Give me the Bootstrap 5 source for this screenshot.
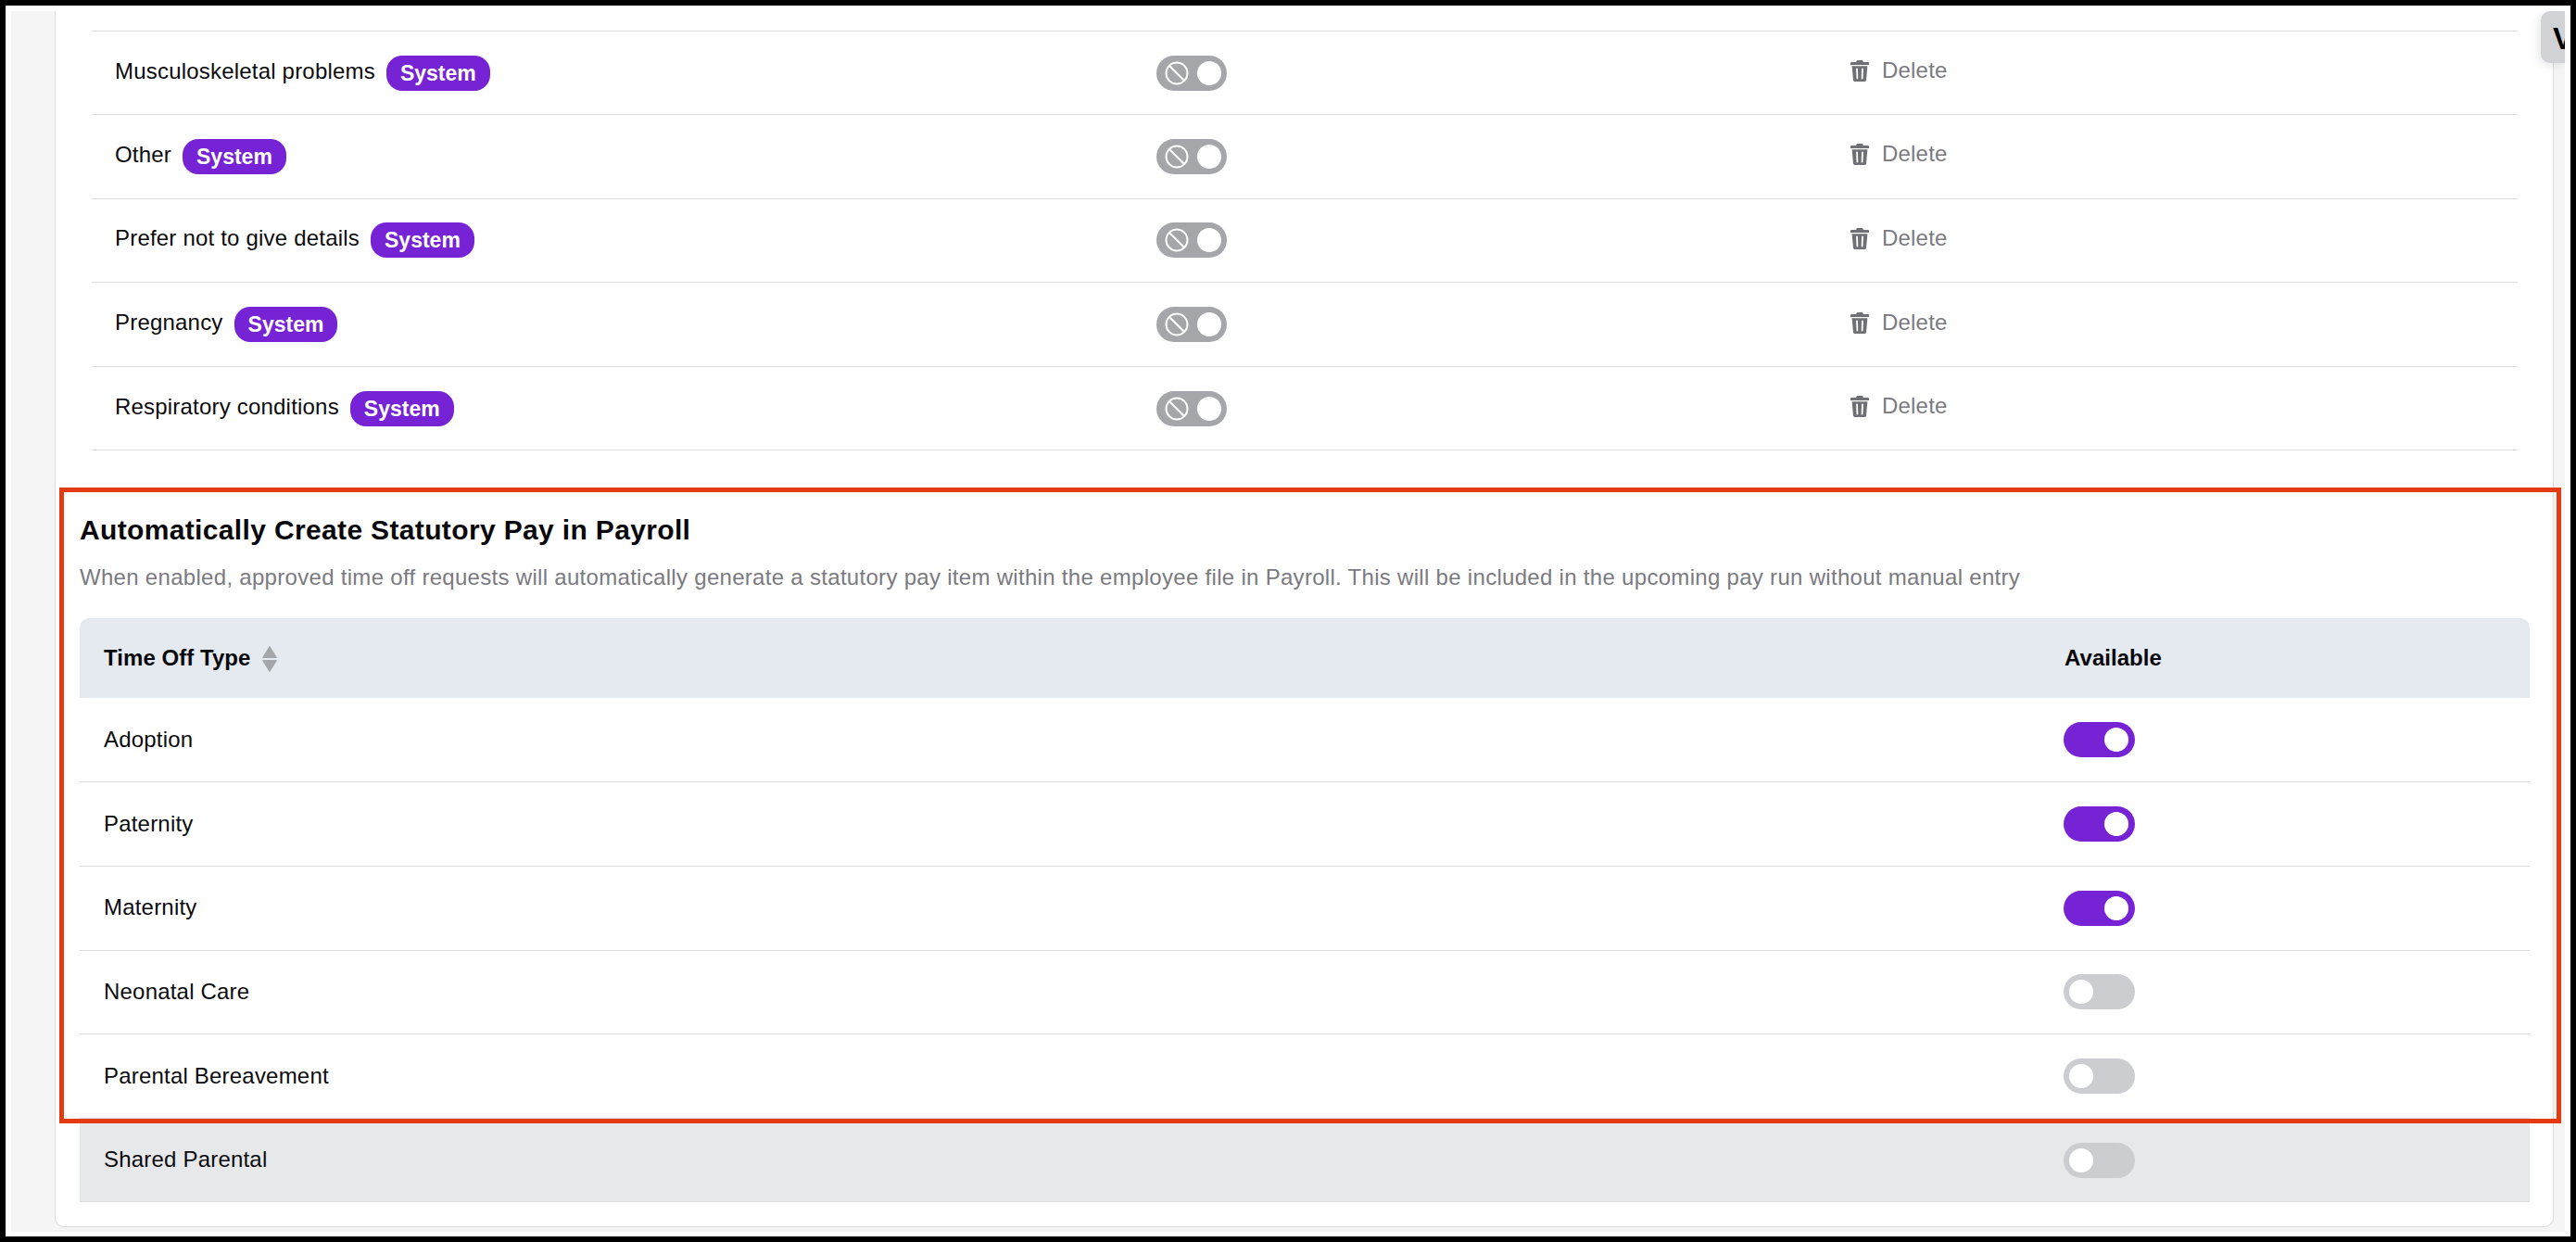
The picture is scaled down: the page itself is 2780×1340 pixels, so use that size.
<!doctype html>
<html lang="en"><head><meta charset="utf-8"><title>Time off settings</title>
<link href="https://cdn.jsdelivr.net/npm/bootstrap@5.3.0/dist/css/bootstrap.min.css" rel="stylesheet">
<style>
html,body{height:100%;margin:0}
body{background:#000;padding:6px;overflow:hidden;font-family:"Liberation Sans",Arial,sans-serif;font-size:24px;color:#0b0b0d;letter-spacing:.2px}
.shot{position:relative;height:1328px;background:#fff;padding:6px 6px 5px}
.canvas{height:100%;background:#f5f5f6;padding:0 12px 5px 47px}
.sheet{height:100%;background:#fff;border:1px solid #dcdcdf;border-top:0;border-radius:0 0 10px 10px;overflow:hidden;padding-top:21px}
.tbl-top{width:2618px;margin:0 0 0 39px;table-layout:fixed}
.tbl-top col.c1{width:1124px}.tbl-top col.c2{width:748px}
.tbl-top,.tbl-pay{--bs-table-bg:transparent;--bs-border-color:#dddde0;color:inherit}
.tbl-top td,.tbl-pay td,.tbl-pay th{padding:0 26px;vertical-align:middle;border-bottom:1.5px solid #dddde0}
.tbl-top tr td:first-child{padding-left:25px}
.tbl-top tr:first-child td{border-top:1.5px solid #dddde0}
.tbl-top td,.tbl-pay td{height:90.6px;line-height:1.2}
.tbl-top tr:first-child td{height:90px}
.sys{display:inline-block;background:#7623d6;color:#fff;font-size:23px;font-weight:700;line-height:38px;height:38px;border-radius:17px;padding:0 15px;margin-left:12px;letter-spacing:0;vertical-align:middle}
.swbox .sw{width:77px;height:38px;margin:0;float:none;border:0;border-radius:19px;display:block;background-color:#cccdd1;background-size:26px 26px;background-position:6px center;background-repeat:no-repeat;background-image:url("data:image/svg+xml,%3csvg xmlns='http://www.w3.org/2000/svg' viewBox='0 0 26 26'%3e%3ccircle cx='13' cy='13' r='13' fill='%23fff'/%3e%3c/svg%3e")}
.swbox .sw:checked{background-color:#7623d6;background-position:calc(100% - 7px) center}
.swbox .sw:focus{box-shadow:none}
.swbox .sw.lock{background-color:#a5a6aa;background-position:calc(100% - 6px) center;width:76px}
.swbox{position:relative;display:block;width:77px;padding:0;min-height:0;margin:0 0 0 -1px}
.swbox svg{position:absolute;left:9px;top:6px;width:26px;height:26px}
.del{color:#7a7a80;display:inline-flex;align-items:center;gap:14px;text-decoration:none}
.del svg{width:20px;height:23px;flex:none}
.pay{padding:68px 25px 0 26px}
.pay h5{font-size:30px;font-weight:700;line-height:36px;margin:0 0 15px;color:#08080a;letter-spacing:.35px}
.pay p{color:#7a7a80;line-height:36px;margin:0 0 26px;letter-spacing:.3px;white-space:nowrap}
.tbl-pay{width:2644px;margin:0;table-layout:fixed}
.tbl-pay col.c2{width:528px}
.tbl-pay th{background:#e5e9f0;height:86px;font-weight:700;color:#08080a;border-bottom:0;letter-spacing:.05px}
.tbl-pay th:first-child{border-top-left-radius:10px}
.tbl-pay th:last-child{border-top-right-radius:10px}
.sorter{width:16px;height:28px;margin-left:13px;vertical-align:middle;margin-top:-2px}
.tbl-pay tr.hov td{background:#e7e8ea}
.mark-box{position:absolute;left:58px;top:520px;width:2700px;height:686px;border:5px solid #e33a0f;pointer-events:none}
.tab-peek{position:absolute;left:2736px;top:6px;width:26px;height:56px;background:#d1d2d6;border-radius:10px 0 0 10px;box-shadow:-3px 3px 10px rgba(0,0,0,.09);overflow:hidden;color:#000;font-weight:700;font-size:33px;line-height:1;padding:13px 0 0 13px;letter-spacing:0}
</style></head>
<body>
<div class="shot">
 <div class="canvas">
  <div class="sheet">
   <table class="table tbl-top mb-0"><colgroup><col class="c1"><col class="c2"><col></colgroup><tbody id="t1"></tbody></table>
   <div class="pay">
    <h5>Automatically Create Statutory Pay in Payroll</h5>
    <p>When enabled, approved time off requests will automatically generate a statutory pay item within the employee file in Payroll. This will be included in the upcoming pay run without manual entry</p>
    <table class="table tbl-pay mb-0"><colgroup><col><col class="c2"></colgroup>
     <thead><tr><th>Time Off Type<svg class="sorter" viewBox="0 0 16 28"><path d="M8 0.5 15.5 12.5H0.5Z" fill="#a5a6aa" stroke="#a5a6aa" stroke-linejoin="round"/><path d="M8 27.5 15.5 15.5H0.5Z" fill="#a5a6aa" stroke="#a5a6aa" stroke-linejoin="round"/></svg></th><th>Available</th></tr></thead>
     <tbody id="t2"></tbody>
    </table>
   </div>
  </div>
 </div>
 <div class="mark-box"></div>
 <div class="tab-peek">V</div>
</div>
<script>
const trash='<svg viewBox="0 0 20 23"><path fill="#6f7076" d="M7 0h6l1 2h5.2c.4 0 .8.4.8.8V5H0V2.8c0-.4.4-.8.8-.8H6zM1.6 6.2h16.8L17 21.6c-.1.8-.7 1.4-1.5 1.4h-11c-.8 0-1.4-.6-1.5-1.4z"/><path stroke="#fff" stroke-width="1.8" stroke-linecap="round" d="M7 9.5l.4 10M13 9.5l-.4 10"/></svg>';
const ban='<svg viewBox="0 0 26 26" fill="none" stroke="#fff" stroke-width="2"><circle cx="13" cy="13" r="11.5"/><path d="M5 5l16 16"/></svg>';
document.getElementById('t1').innerHTML=["Musculoskeletal problems","Other","Prefer not to give details","Pregnancy","Respiratory conditions"].map(n=>`<tr><td>${n}<span class="sys">System</span></td><td><div class="form-check form-switch swbox"><input class="form-check-input sw lock" type="checkbox" role="switch" aria-label="Locked">${ban}</div></td><td><a class="del" href="#">${trash}Delete</a></td></tr>`).join('');
document.getElementById('t2').innerHTML=[["Adoption",1],["Paternity",1],["Maternity",1],["Neonatal Care",0],["Parental Bereavement",0],["Shared Parental",0]].map((r,i)=>`<tr${i==5?' class="hov"':''}><td>${r[0]}</td><td><div class="form-check form-switch swbox"><input class="form-check-input sw" type="checkbox" role="switch" aria-label="${r[0]}"${r[1]?' checked':''}></div></td></tr>`).join('');
</script>
</body></html>
